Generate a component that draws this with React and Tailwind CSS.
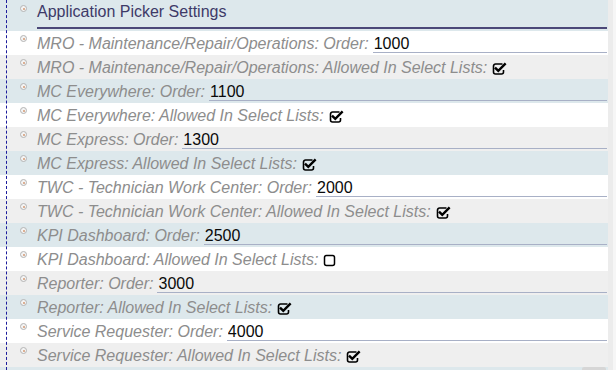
import React from "react";

const rows = [
  { label: "MRO - Maintenance/Repair/Operations: Order:", value: "1000" },
  { label: "MRO - Maintenance/Repair/Operations: Allowed In Select Lists:", checked: true },
  { label: "MC Everywhere: Order:", value: "1100" },
  { label: "MC Everywhere: Allowed In Select Lists:", checked: true },
  { label: "MC Express: Order:", value: "1300" },
  { label: "MC Express: Allowed In Select Lists:", checked: true },
  { label: "TWC - Technician Work Center: Order:", value: "2000" },
  { label: "TWC - Technician Work Center: Allowed In Select Lists:", checked: true },
  { label: "KPI Dashboard: Order:", value: "2500" },
  { label: "KPI Dashboard: Allowed In Select Lists:", checked: false },
  { label: "Reporter: Order:", value: "3000" },
  { label: "Reporter: Allowed In Select Lists:", checked: true },
  { label: "Service Requester: Order:", value: "4000" },
  { label: "Service Requester: Allowed In Select Lists:", checked: true },
];

const bgs = ["bg-white", "bg-[#efefef]", "bg-[#dde8ec]"];

function Bullet({ top }) {
  return (
    <span
      className={`ml-[20px] ${top} flex h-[7px] w-[7px] shrink-0 items-center justify-center rounded-full border border-[#b4b4b4] bg-[#f4f4f4]`}
    >
      <span className="h-[2px] w-[2px] rounded-full bg-[#d59a74]" />
    </span>
  );
}

function CheckIcon({ checked }) {
  if (!checked) {
    return (
      <svg width="13" height="13" viewBox="0 0 13 13" className="ml-[5px] mt-[2px] shrink-0">
        <rect x="1.5" y="1.5" width="10" height="10" rx="2" fill="none" stroke="#000" strokeWidth="1.5" />
      </svg>
    );
  }
  return (
    <svg width="15" height="13" viewBox="0 0 15 13" className="ml-[5px] mt-[2px] shrink-0">
      <path d="M10.5 2 H3.5 A2 2 0 0 0 1.5 4 V10 A2 2 0 0 0 3.5 12 H9.5 A2 2 0 0 0 11.5 10 V8" fill="none" stroke="#000" strokeWidth="1.6" />
      <path d="M3.8 6.4 L6.3 8.9 L12.8 2.2" fill="none" stroke="#000" strokeWidth="2.4" strokeLinejoin="miter" strokeLinecap="square" />
    </svg>
  );
}

export default function App() {
  return (
    <div
      className="relative flex h-[370px] w-[616px] overflow-hidden bg-white"
      style={{ fontFamily: '"Liberation Sans", Arial, sans-serif' }}
    >
      <div className="flex w-[608px] flex-col">
        <div className="flex h-[31px] shrink-0 items-start bg-[#dde8ec]">
          <Bullet top="mt-[5px]" />
          <div className="ml-[10px] mr-[1px] flex h-[29px] flex-1 items-start border-b-2 border-[#4b4878] text-[16px] leading-[24px] text-[#3d3a68]">
            Application Picker Settings
          </div>
        </div>
        {rows.map((r, i) => (
          <div key={i} className={`flex h-[24px] shrink-0 items-start ${bgs[i % 3]}`}>
            <Bullet top="mt-[4px]" />
            <div className="ml-[10px] mr-[1px] flex h-[24px] flex-1 items-center text-[16px] italic">
              <span className="mt-[2px] whitespace-pre text-[#8d8d8d]">{r.label}</span>
              {r.value !== undefined ? (
                <input
                  readOnly
                  value={r.value}
                  className="ml-[4px] h-[20px] min-w-0 flex-1 border-b border-[#a8b0c6] bg-transparent pl-[1px] pt-[2px] text-[16px] not-italic text-[#0a0a0a] outline-none"
                  style={{ fontFamily: '"Liberation Sans", Arial, sans-serif' }}
                />
              ) : (
                <CheckIcon checked={r.checked} />
              )}
            </div>
          </div>
        ))}
        <div className="flex h-[24px] shrink-0 items-start justify-end bg-[#dde8ec]">
          <div className="mr-[2px] h-[20px] w-[24px] rounded-[2px] bg-[#d6d6d6]" />
        </div>
      </div>
      <div className="flex w-[8px] bg-[#ececec]">
        <div className="ml-auto w-[3px] bg-[#f6f6f6]" />
      </div>
      <div className="pointer-events-none absolute bottom-0 left-[6px] top-0 border-l border-dashed border-[#1c1c9c]" />
    </div>
  );
}
